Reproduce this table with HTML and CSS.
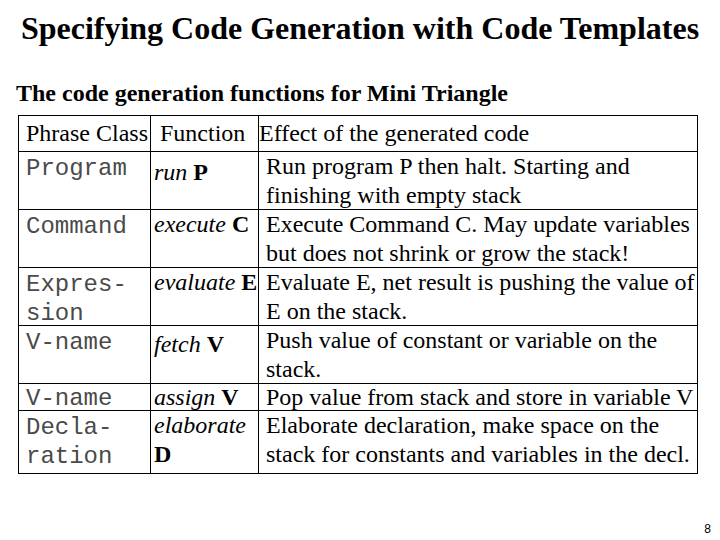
FILE: index.html
```html
<!DOCTYPE html>
<html>
<head>
<meta charset="utf-8">
<link rel="stylesheet" href="styles.css">
</head>
<body>
<div class="slide">
  <h1 class="title">Specifying Code Generation with Code Templates</h1>
  <h2 class="subtitle">The code generation functions for Mini Triangle</h2>
  <table class="codegen">
    <colgroup>
      <col class="c1"><col class="c2"><col class="c3">
    </colgroup>
    <tr class="head">
      <td class="h1"><div class="cell">Phrase Class</div></td>
      <td class="h2"><div class="cell">Function</div></td>
      <td class="h3"><div class="cell">Effect of the generated code</div></td>
    </tr>
    <tr class="two">
      <td class="mono"><div class="cell">Program</div></td>
      <td class="fn"><div class="cell low"><i>run</i> <b>P</b></div></td>
      <td class="eff"><div class="cell">Run program P then halt. Starting and<br>finishing with empty stack</div></td>
    </tr>
    <tr class="two">
      <td class="mono"><div class="cell">Command</div></td>
      <td class="fn"><div class="cell"><i>execute</i> <b>C</b></div></td>
      <td class="eff"><div class="cell">Execute Command C. May update variables<br>but does not shrink or grow the stack!</div></td>
    </tr>
    <tr class="two">
      <td class="mono"><div class="cell">Expres-<br>sion</div></td>
      <td class="fn"><div class="cell"><i>evaluate</i> <b>E</b></div></td>
      <td class="eff"><div class="cell">Evaluate E, net result is pushing the value of<br>E on the stack.</div></td>
    </tr>
    <tr class="two">
      <td class="mono"><div class="cell">V-name</div></td>
      <td class="fn"><div class="cell lower"><i>fetch</i> <b>V</b></div></td>
      <td class="eff"><div class="cell">Push value of constant or variable on the<br>stack.</div></td>
    </tr>
    <tr class="one">
      <td class="mono"><div class="cell">V-name</div></td>
      <td class="fn"><div class="cell"><i>assign</i> <b>V</b></div></td>
      <td class="eff"><div class="cell">Pop value from stack and store in variable V</div></td>
    </tr>
    <tr class="last">
      <td class="mono"><div class="cell">Decla-<br>ration</div></td>
      <td class="fn"><div class="cell"><i>elaborate</i><br><b>D</b></div></td>
      <td class="eff"><div class="cell">Elaborate declaration, make space on the<br>stack for constants and variables in the decl.</div></td>
    </tr>
  </table>
  <div class="pagenum">8</div>
</div>
</body>
</html>
```

FILE: styles.css
```css
html, body {
  margin: 0;
  padding: 0;
  background: #ffffff;
}

.slide {
  position: relative;
  width: 720px;
  height: 540px;
  overflow: hidden;
  font-family: "Liberation Serif", "Times New Roman", serif;
  color: #000;
}

.title {
  margin: 0;
  padding-top: 8px;
  font-size: 32px;
  font-weight: bold;
  text-align: center;
  line-height: 40px;
  height: 40px;
  white-space: nowrap;
}

.subtitle {
  margin: 0;
  padding-top: 32px;
  padding-left: 16px;
  font-size: 24px;
  font-weight: bold;
  line-height: 26px;
  height: 26px;
  white-space: nowrap;
}

.codegen {
  margin: 9px 0 0 18px;
  border-collapse: collapse;
  width: 679px;
  table-layout: fixed;
  font-size: 24px;
}

.c1 { width: 132px; }
.c2 { width: 108px; }
.c3 { width: 439px; }

.codegen td {
  border: 1px solid #000;
  vertical-align: top;
  padding: 0;
  line-height: 0;
  white-space: nowrap;
  overflow: hidden;
}

.cell {
  line-height: 29px;
  padding-left: 7px;
}

.head .cell { height: 35px; line-height: 35px; }
.two .cell { height: 57px; }
.last .cell { height: 62px; }
.one .cell { height: 26px; line-height: 27px; }

.h1 .cell { padding-left: 7px; }
.h2 .cell { padding-left: 9px; }
.h3 .cell { padding-left: 0; }

.mono .cell {
  font-family: "Liberation Mono", "Courier New", monospace;
  font-size: 24px;
  color: #4a4a4a;
  padding-left: 7px;
}

.two .mono .cell { padding-top: 2px; height: 55px; }
.last .mono .cell { padding-top: 2px; height: 60px; }
.one .mono .cell { padding-top: 1px; height: 25px; }

.fn .cell { padding-left: 3px; }
.fn .cell.low { padding-top: 6px; height: 51px; }
.fn .cell.lower { padding-top: 4px; height: 53px; }

.pagenum {
  position: absolute;
  right: 9px;
  bottom: 4px;
  font-family: "Liberation Sans", Arial, sans-serif;
  font-size: 12px;
}
```
